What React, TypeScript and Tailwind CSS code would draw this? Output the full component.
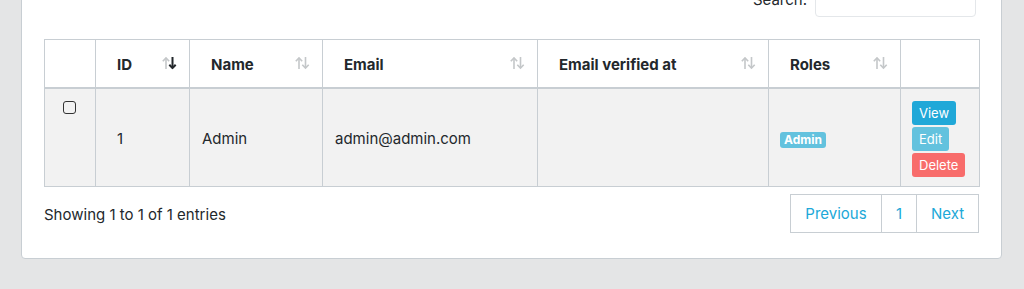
const SortIcon = ({ active }: { active?: "asc" | "desc" }) => (
  <svg width="15" height="13" viewBox="0 0 15 13" className="absolute right-[12px] top-1/2 -translate-y-1/2" fill="none" strokeWidth="1.6">
    {/* up arrow */}
    <g stroke={active === "asc" ? "#23282c" : "#c4c7c9"}>
      <path d="M4 12.5V1.5" />
      <path d="M0.8 4.8L4 1.5L7.2 4.8" />
    </g>
    {/* down arrow */}
    <g stroke={active === "desc" ? "#23282c" : "#c4c7c9"} strokeWidth={active === "desc" ? 2 : 1.6}>
      <path d="M10.5 0.5V11.5" />
      <path d="M7.3 8.2L10.5 11.5L13.7 8.2" />
    </g>
  </svg>
);

const columns = [
  { label: "", width: "w-[51px]", sortable: false },
  { label: "ID", width: "w-[94px]", sortable: true, active: "desc" as const },
  { label: "Name", width: "w-[133px]", sortable: true },
  { label: "Email", width: "w-[215px]", sortable: true },
  { label: "Email verified at", width: "w-[231px]", sortable: true },
  { label: "Roles", width: "w-[132px]", sortable: true },
  { label: "", width: "w-[79px]", sortable: false }
];

export default function App() {
  return (
    <div
      className="h-[289px] overflow-hidden bg-[#e4e5e6] pl-[21px] pr-[22px] text-[15px] leading-[21px] text-[#23282c]"
      style={{ fontFamily: "Inter, 'Noto Sans', sans-serif" }}
    >
      <div className="mt-[-39px] rounded-[4px] border border-[#c8ced3] bg-white px-[22px] pt-[20px] pb-[25px]">
        {/* Search */}
        <div className="flex items-center justify-end pr-[3px]">
          <label className="mr-[8px]">Search:</label>
          <input type="text" className="h-[35px] w-[161px] rounded-[4px] border border-[#e4e7ea] outline-none" />
        </div>

        {/* Table */}
        <table className="mt-[22px] w-[935px] table-fixed border-collapse border border-[#c8ced3]">
          <thead>
            <tr>
              {columns.map((col, i) => (
                <th
                  key={i}
                  className={`${col.width} relative h-[48px] border border-b-2 border-[#c8ced3] pl-[21px] pt-[2px] text-left font-bold`}
                >
                  {col.label}
                  {col.sortable && <SortIcon active={col.active} />}
                </th>
              ))}
            </tr>
          </thead>
          <tbody>
            <tr className="h-[99px] bg-[#f2f2f2]">
              <td className="border border-[#c8ced3] pt-[12px] align-top">
                <div className="ml-[18px] h-[13px] w-[13px] rounded-[3px] border-[1.5px] border-[#333]" />
              </td>
              <td className="border border-[#c8ced3] pl-[21px] pt-[2px]">1</td>
              <td className="border border-[#c8ced3] pl-[12px] pt-[2px]">Admin</td>
              <td className="border border-[#c8ced3] pl-[12px] pt-[2px]">admin@admin.com</td>
              <td className="border border-[#c8ced3]"></td>
              <td className="border border-[#c8ced3] pl-[11px] pt-[2px]">
                <span className="inline-block rounded-[3px] bg-[#63c2de] px-[4px] text-[12px] font-bold leading-[16px] text-white">
                  Admin
                </span>
              </td>
              <td className="border border-[#c8ced3] pt-[12px] pl-[11px] align-top">
                <div className="flex flex-col items-start gap-[2px] text-[13px] leading-[24px] text-white">
                  <button className="rounded-[3px] bg-[#20a8d8] px-[7px]">View</button>
                  <button className="rounded-[3px] bg-[#63c2de] px-[7px]">Edit</button>
                  <button className="rounded-[3px] bg-[#f86c6b] px-[7px]">Delete</button>
                </div>
              </td>
            </tr>
          </tbody>
        </table>

        {/* Footer */}
        <div className="mt-[7px] flex items-center justify-between">
          <div className="pt-[1px]">Showing 1 to 1 of 1 entries</div>
          <div className="flex text-[#20a8d8]">
            <a className="flex h-[39px] w-[92px] items-center justify-center border border-[#c8ced3]">Previous</a>
            <a className="-ml-px flex h-[39px] w-[36px] items-center justify-center border border-[#c8ced3]">1</a>
            <a className="-ml-px flex h-[39px] w-[63px] items-center justify-center border border-[#c8ced3]">Next</a>
          </div>
        </div>
      </div>
    </div>
  );
}
